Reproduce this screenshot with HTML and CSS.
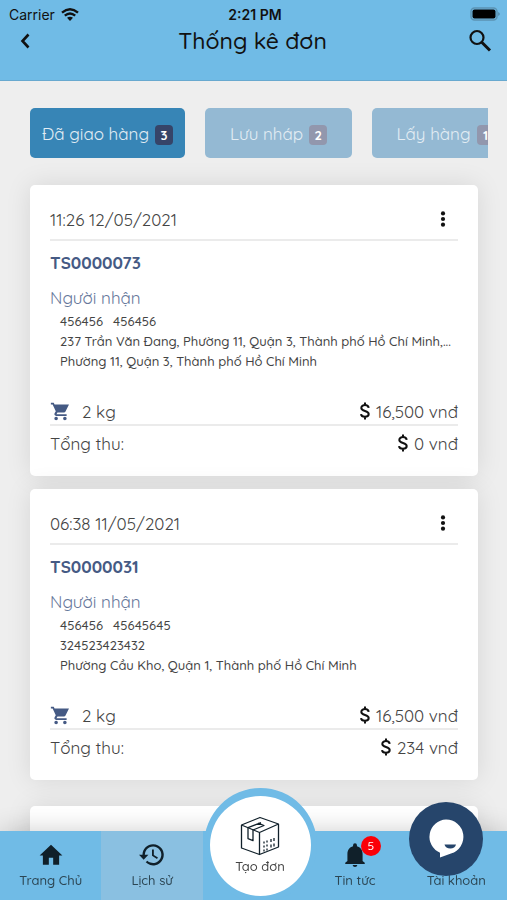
FILE: index.html
```html
<!DOCTYPE html>
<html lang="vi">
<head>
    <meta charset="UTF-8">
    <meta name="viewport" content="width=device-width, initial-scale=1.0">
    <title>Thống kê đơn</title>
    <link rel="stylesheet" href="styles.css">
</head>
<body>
    <!-- shared icons -->
    <svg class="sprite" aria-hidden="true">
        <symbol id="dots" viewBox="0 0 24 24"><circle cx="12" cy="4.500" r="2.800"/><circle cx="12" cy="12" r="2.800"/><circle cx="12" cy="19.500" r="2.800"/></symbol>
        <symbol id="cart" viewBox="0 0 24 24"><path d="M7 18c-1.1 0-2 .9-2 2s.9 2 2 2 2-.9 2-2-.9-2-2-2zM1 2v2h2l3.600 7.600-1.350 2.450C4.520 15.370 5.480 17 7 17h12v-2H7.420l1.100-2h7.450c.75 0 1.410-.41 1.750-1.030L21.700 4H5.210l-.94-2H1zm16 16c-1.100 0-2 .9-2 2s.9 2 2 2 2-.9 2-2-.9-2-2-2z"/></symbol>
        <symbol id="dollar" viewBox="0 0 12 20"><path d="M9.700 6.800C9.400 5.100 8 4.100 6 4.100S2.300 5.200 2.300 6.900C2.300 10.700 9.700 9.200 9.700 13 9.700 14.800 8.200 15.800 6 15.800S2.200 14.800 2 13.100M6 1.500v3M6 15.500v3" fill="none" stroke="currentColor" stroke-width="2"/></symbol>
    </svg>

    <header class="header">
        <div class="status">
            <span class="carrier">Carrier
                <svg width="18" height="13" viewBox="0 0 18 13" fill="none" stroke="currentColor" stroke-width="2.400"><path d="M1 4.700Q9-2 17 4.700M3.800 7.700Q9 3.300 14.200 7.700"/><path d="M9 13L6 9.800Q9 7.500 12 9.800Z" fill="currentColor" stroke="none"/></svg>
            </span>
            <span class="time">2:21 PM</span>
            <svg class="battery" width="31" height="14" viewBox="0 0 31 14"><rect x="1" y="1" width="26" height="12" rx="3.500" fill="none" stroke="#5b93b3" stroke-width="1.500"/><rect x="2.500" y="2.500" width="23" height="9" rx="2"/><path d="M28.500 5q2 2 0 4z" fill="#3f6b84"/></svg>
        </div>
        <div class="title-bar">
            <button class="icon-button" aria-label="Quay lại"><svg width="24" height="24" viewBox="0 0 24 24" fill="none" stroke="currentColor" stroke-width="2.600"><path d="M15.500 5.500L9.500 12l6 6.500"/></svg></button>
            <h1>Thống kê đơn</h1>
            <button class="icon-button" aria-label="Tìm kiếm"><svg width="24" height="24" viewBox="0 0 24 24" fill="none" stroke="currentColor" stroke-width="2.200"><circle cx="9" cy="8.500" r="6.500"/><path d="M13.500 13l8.500 8.500" stroke-width="3"/></svg></button>
        </div>
    </header>

    <main>
        <div class="tabs">
            <button class="tab active">Đã giao hàng <span class="count">3</span></button>
            <button class="tab">Lưu nháp <span class="count">2</span></button>
            <button class="tab">Lấy hàng <span class="count">1</span></button>
        </div>

        <article class="card">
            <div class="card-head">
                <time>11:26 12/05/2021</time>
                <button class="more" aria-label="Tùy chọn"><svg width="18" height="20"><use href="#dots"/></svg></button>
            </div>
            <h2>TS0000073</h2>
            <h3>Người nhận</h3>
            <div class="address">
                <p><span>456456</span><span>456456</span></p>
                <p>237 Trần Văn Đang, Phường 11, Quận 3, Thành phố Hồ Chí Minh,...</p>
                <p>Phường 11, Quận 3, Thành phố Hồ Chí Minh</p>
            </div>
            <div class="row weight">
                <span class="kg"><svg width="21" height="21"><use href="#cart"/></svg>2 kg</span>
                <span class="money"><svg width="12" height="20"><use href="#dollar"/></svg>16,500 vnđ</span>
            </div>
            <div class="row total">
                <span>Tổng thu:</span>
                <span class="money"><svg width="12" height="20"><use href="#dollar"/></svg>0 vnđ</span>
            </div>
        </article>

        <article class="card">
            <div class="card-head">
                <time>06:38 11/05/2021</time>
                <button class="more" aria-label="Tùy chọn"><svg width="18" height="20"><use href="#dots"/></svg></button>
            </div>
            <h2>TS0000031</h2>
            <h3>Người nhận</h3>
            <div class="address">
                <p><span>456456</span><span>45645645</span></p>
                <p>324523423432</p>
                <p>Phường Cầu Kho, Quận 1, Thành phố Hồ Chí Minh</p>
            </div>
            <div class="row weight">
                <span class="kg"><svg width="21" height="21"><use href="#cart"/></svg>2 kg</span>
                <span class="money"><svg width="12" height="20"><use href="#dollar"/></svg>16,500 vnđ</span>
            </div>
            <div class="row total">
                <span>Tổng thu:</span>
                <span class="money"><svg width="12" height="20"><use href="#dollar"/></svg>234 vnđ</span>
            </div>
        </article>

        <article class="card next"></article>
    </main>

    <nav class="nav">
        <a href="#" class="nav-item">
            <svg width="26" height="26" viewBox="0 0 24 24" fill="currentColor"><path d="M10 21v-6.500h4V21h5.500v-8.500h3L12 2.500 1.500 12.500h3V21z"/></svg>
            Trang Chủ
        </a>
        <a href="#" class="nav-item current">
            <svg width="26" height="26" viewBox="0 0 24 24" fill="currentColor"><path d="M13 2a9.800 9.800 0 0 0-9.800 9.800H0l4.300 4.500 4.400-4.500H5.400A7.600 7.600 0 1 1 7.700 17.200L6.200 18.800A9.800 9.800 0 1 0 13 2zm-1 5v5.800l4.600 2.800.9-1.400-3.800-2.300V7z"/></svg>
            Lịch sử
        </a>
        <div class="nav-item">
            <a href="#" class="create">
                <svg width="40" height="40" viewBox="0 0 40 40" fill="none" stroke="currentColor" stroke-width="1.300" stroke-linejoin="round"><path d="M1.500 9L20 1.500 38.500 8v23L19.500 38.500 1.500 32zM1.500 9l18 7.500L38.500 8M19.500 16.500v22"/><path d="M8 11.700v11l5 2V14L24 9.500l-6-2.300M8 11.700l13-5M24 25.500v2M24 29.500v2M24 33.500v2M27 24.500v2M27 28.500v2M27 32.500v2M31 23v3M34 22v3M31 28.500v3M34 27.500v3"/></svg>
                Tạo đơn
            </a>
        </div>
        <a href="#" class="nav-item">
            <span class="bell">
                <svg width="26" height="26" viewBox="0 0 24 24" fill="currentColor"><path d="M12 23a2.200 2.200 0 0 0 2.200-1.800H9.800A2.200 2.200 0 0 0 12 23zm7-5.500V11c0-3.500-2-6.200-5.200-7.100V3a1.800 1.800 0 0 0-3.600 0v.9C7 4.800 5 7.500 5 11v6.500l-2 1.700V20.200h18v-1z"/></svg>
                <span class="alert">5</span>
            </span>
            Tin tức
        </a>
        <a href="#" class="nav-item">
            <span class="icon-space"></span>
            Tài khoản
        </a>
        <button class="chat" aria-label="Chat">
            <svg width="74" height="74" viewBox="0 0 74 74"><path fill="#fff" d="M37 17.500a17.300 17.300 0 0 1 5 33.900L31 55.500v-4.800A17.300 17.300 0 0 1 37 17.500z"/><path fill="#26456b" d="M35.500 42.500h11.500q-1 4-5.700 4t-5.800-4z"/></svg>
        </button>
    </nav>
</body>
</html>
```
FILE: styles.css
```css
* { box-sizing: border-box; }

body {
    margin: 0;
    height: 100vh;
    display: flex;
    flex-direction: column;
    overflow: hidden;
    background: #eee;
    color: #444;
    font-family: Quicksand, Inter, Roboto, sans-serif;
    font-size: 17px;
    font-weight: 400;
}

button { padding: 0; border: 0; background: none; font: inherit; color: inherit; cursor: pointer; }
h1, h2, h3, p { margin: 0; }
svg { display: block; flex: none; }
.sprite { position: absolute; width: 0; height: 0; }

/* header */
.header {
    flex: none;
    height: 81px;
    padding-top: 4px;
    background: #70bbe6;
    border-bottom: 1px solid #68a9cf;
    color: #111;
}
.status {
    display: grid;
    grid-template-columns: 1fr auto 1fr;
    align-items: center;
    height: 20px;
    padding: 0 6px 0 9px;
    font-family: Inter, sans-serif;
    font-size: 14px;
}
.carrier { display: flex; align-items: center; gap: 6px; }
.time { font-weight: 600; }
.battery { justify-self: end; }
.title-bar {
    display: flex;
    justify-content: space-between;
    align-items: center;
    height: 33px;
    padding: 0 15px 0 13px;
}
.title-bar h1 { font-size: 23px; font-weight: 500; }

/* tabs */
main { flex: 1; padding: 27px 29px 0 30px; overflow: hidden; }
.tabs { display: flex; gap: 20px; margin-right: -10px; overflow: hidden; }
.tab {
    flex: none;
    display: flex;
    align-items: center;
    justify-content: center;
    gap: 6px;
    min-width: 147px;
    height: 50px;
    padding: 0 12px;
    border-radius: 5px;
    background: #94b9d3;
    color: #e3edf4;
    white-space: nowrap;
}
.tab.active { background: #3785b6; }
.count {
    width: 18px;
    margin-top: 4px;
    border-radius: 4px;
    background: #9297ad;
    color: #fff;
    font-size: 13px;
    line-height: 20px;
    font-weight: 700;
}
.active .count { background: #364468; }

/* order cards */
.card {
    margin: 0 0 13px;
    padding: 14px 20px 20px;
    border-radius: 5px;
    background: #fff;
    box-shadow: 0 0 26px rgba(0, 0, 0, .1);
}
.tabs + .card { margin-top: 27px; }
.card-head {
    display: flex;
    justify-content: space-between;
    align-items: center;
    height: 42px;
    border-bottom: 2px solid #ebebeb;
}
.more { padding-right: 6px; color: #111; }
.more svg, .kg svg { fill: currentColor; }
.card h2 { margin-top: 10px; font-size: 17px; line-height: 24px; font-weight: 700; color: #455a84; }
.card h3 { margin-top: 11px; font-size: 17px; line-height: 24px; font-weight: 400; color: #66779b; }
.address { padding-left: 10px; margin: 1px 0 27px; font-size: 13px; line-height: 20px; font-weight: 500; }
.address p { white-space: nowrap; }
.address span { margin-right: 10px; }
.row { display: flex; justify-content: space-between; align-items: center; height: 26px; }
.weight { height: 28px; border-bottom: 2px solid #ebebeb; }
.total { margin-top: 4px; }
.kg { display: flex; align-items: center; gap: 11px; }
.kg svg { color: #455a84; }
.money { display: flex; align-items: center; gap: 5px; }
.money svg { color: #111; }
.next { margin-top: 26px; height: 291px; }

/* bottom navigation */
.nav {
    position: fixed;
    left: 0;
    right: 0;
    bottom: 0;
    display: flex;
    height: 69px;
    background: #70bbe6;
    box-shadow: 0 0 26px rgba(0, 0, 0, .2);
}
.nav-item {
    flex: 1 1 0;
    display: flex;
    flex-direction: column;
    align-items: center;
    gap: 2px;
    padding-top: 11px;
    color: #2c4654;
    font-size: 13px;
    line-height: 20px;
    font-weight: 500;
    text-decoration: none;
}
.nav-item svg { color: #10202a; }
.current { background: #8ac0e1; }
.create {
    position: absolute;
    left: calc(50% - 50px);
    top: -43px;
    width: 113px;
    height: 114px;
    display: flex;
    flex-direction: column;
    align-items: center;
    padding-top: 20px;
    border: 6px solid #70bbe6;
    border-top-width: 8px;
    border-radius: 50%;
    background: #fff;
    color: #444;
    text-decoration: none;
}
.bell { position: relative; }
.alert {
    position: absolute;
    left: 19px;
    top: -6px;
    width: 20px;
    border-radius: 50%;
    background: #fb0007;
    color: #fff;
    font-size: 12px;
    line-height: 20px;
    text-align: center;
}
.icon-space { height: 26px; }
.chat {
    position: absolute;
    right: 24px;
    top: -29px;
    border-radius: 50%;
    background: #26456b;
}
```
